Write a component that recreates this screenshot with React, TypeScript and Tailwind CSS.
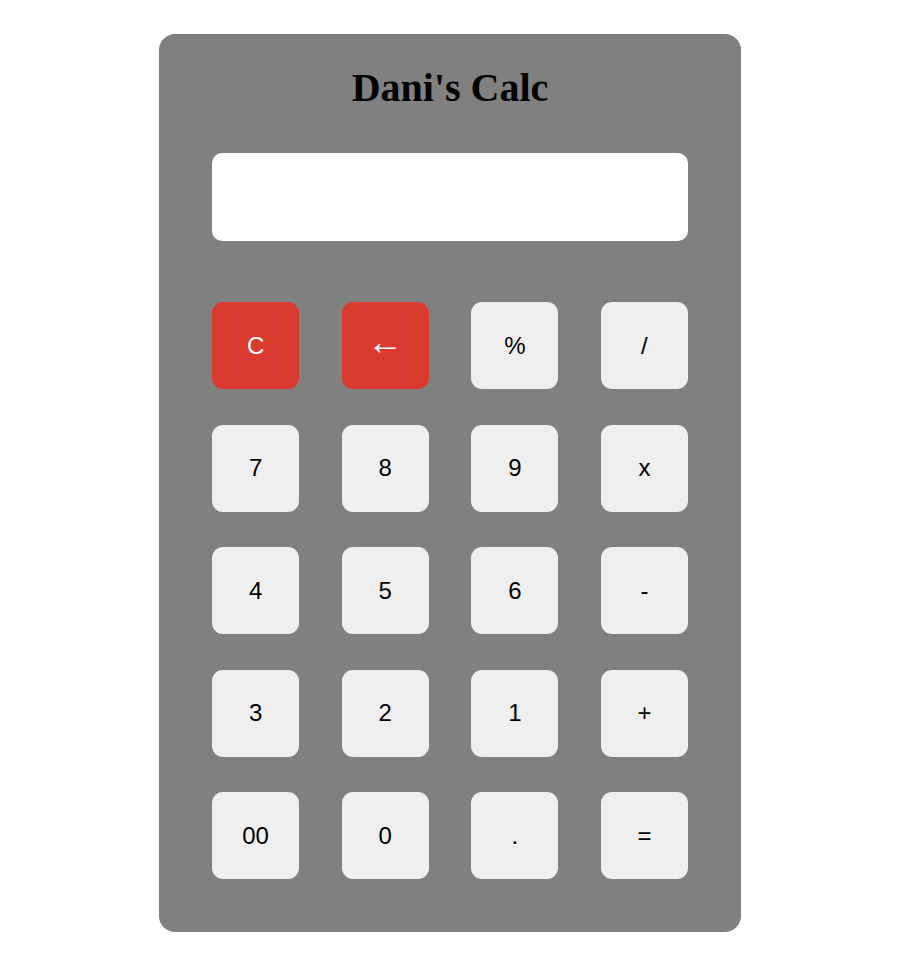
const keys = [
  { label: "C", red: true },
  { label: "←", red: true, big: true },
  { label: "%" },
  { label: "/" },
  { label: "7" },
  { label: "8" },
  { label: "9" },
  { label: "x" },
  { label: "4" },
  { label: "5" },
  { label: "6" },
  { label: "-" },
  { label: "3" },
  { label: "2" },
  { label: "1" },
  { label: "+" },
  { label: "00" },
  { label: "0" },
  { label: "." },
  { label: "=" },
];

export default function App() {
  return (
    <div className="min-h-screen bg-white pt-[34px] pl-[159px] font-['Liberation_Sans',Arial,sans-serif]">
      <div className="w-[582px] rounded-[16px] bg-[#808080] px-[53px] pt-[32px] pb-[53px]">
        {/* Title */}
        <h1 className="text-center font-['Liberation_Serif','Times_New_Roman',serif] text-[40px] font-bold leading-[44px] text-black">
          Dani's Calc
        </h1>

        {/* Display */}
        <div className="mt-[43px] h-[88px] w-full rounded-[10px] bg-white"></div>

        {/* Keys */}
        <div className="mt-[61px] grid grid-cols-4 gap-x-[42.5px] gap-y-[35.5px]">
          {keys.map((k, idx) => (
            <button
              key={idx}
              className={
                k.red
                  ? "flex h-[87px] items-center justify-center rounded-[11px] bg-[#db3a2e] text-[24px] text-white"
                  : "flex h-[87px] items-center justify-center rounded-[11px] bg-[#efefef] text-[24px] text-black"
              }
            >
              {k.big ? (
                <span className="-mt-[7px] text-[36px] leading-none">{k.label}</span>
              ) : (
                k.label
              )}
            </button>
          ))}
        </div>
      </div>
    </div>
  );
}
